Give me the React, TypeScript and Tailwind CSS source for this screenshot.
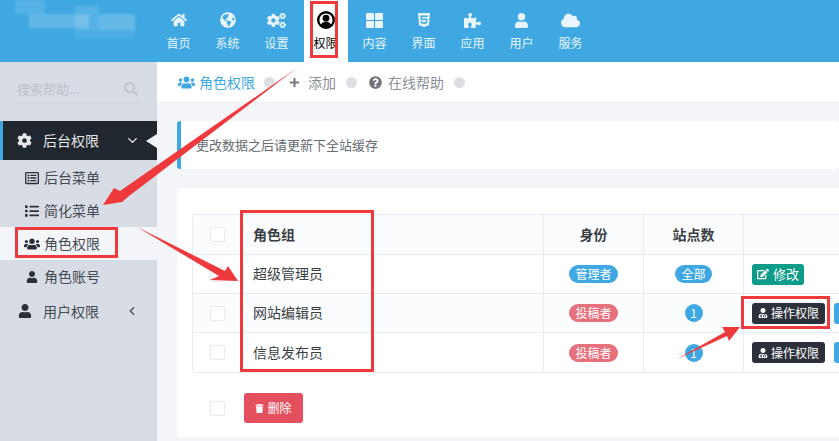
import { FaHome, FaGlobeAmericas, FaCogs, FaThLarge, FaHtml5, FaPuzzlePiece, FaUser, FaCloud, FaUsers, FaPlus, FaQuestionCircle, FaSearch, FaCog, FaRegListAlt, FaList, FaTrash, FaEdit, FaUserMd } from 'react-icons/fa';
import { ChevronDown, ChevronLeft } from 'lucide-react';

function AccountIcon({ size }: { size: number }) {
  return (
    <svg width={size} height={size} viewBox="0 0 18 18">
      <circle cx="9" cy="9" r="7.8" fill="#fff" stroke="#000" strokeWidth="2.4" />
      <circle cx="9" cy="7.2" r="3.4" fill="#000" />
      <path d="M3.6 14.4c1-2.6 3-3.6 5.4-3.6s4.4 1 5.4 3.6c-1.4 1.4-3.3 2.2-5.4 2.2s-4-.8-5.4-2.2z" fill="#000" />
    </svg>
  );
}

const navItems = [
  { label: '首页', icon: FaHome, size: 16 },
  { label: '系统', icon: FaGlobeAmericas, size: 16 },
  { label: '设置', icon: FaCogs, size: 19 },
  { label: '权限', icon: AccountIcon, size: 18, active: true },
  { label: '内容', icon: FaThLarge, size: 17 },
  { label: '界面', icon: FaHtml5, size: 16 },
  { label: '应用', icon: FaPuzzlePiece, size: 17 },
  { label: '用户', icon: FaUser, size: 15 },
  { label: '服务', icon: FaCloud, size: 19 },
];

const subItems = [
  { label: '后台菜单', icon: FaRegListAlt, size: 14 },
  { label: '简化菜单', icon: FaList, size: 14 },
  { label: '角色权限', icon: FaUsers, size: 16, active: true },
  { label: '角色账号', icon: FaUser, size: 12 },
];

const roles = [
  { name: '超级管理员', role: '管理者', admin: true, sites: '全部' },
  { name: '网站编辑员', role: '投稿者', admin: false, sites: '1' },
  { name: '信息发布员', role: '投稿者', admin: false, sites: '1' },
];

function Check() {
  return <span className="block h-[15px] w-[15px] rounded-[2px] border border-[#e8eaee] bg-white" />;
}

function Header() {
  return (
    <header className="flex h-[62px] shrink-0 bg-[#3fa8e2]">
      <div className="w-[154px] shrink-0 pl-[15px]">
        <svg width="140" height="40" viewBox="0 0 140 40">
          <g fill="#ffffff" style={{ filter: 'blur(1px)' }}>
            <rect x="0" y="0" width="30" height="14" opacity="0.12" />
            <rect x="14" y="14" width="60" height="14" opacity="0.18" />
            <rect x="60" y="6" width="24" height="24" opacity="0.12" />
            <rect x="84" y="14" width="36" height="16" opacity="0.2" />
            <rect x="60" y="30" width="60" height="8" opacity="0.08" />
          </g>
        </svg>
      </div>
      {navItems.map((item) => {
        const Icon = item.icon;
        return (
          <div key={item.label} className="flex w-[49px] justify-center">
            <div className={`flex w-[44px] flex-col items-center pt-[11px] ${item.active ? 'bg-white text-black' : 'text-[#e8f5fc]'}`}>
              <span className="flex h-[18px] items-center justify-center">
                <Icon size={item.size} />
              </span>
              <span className="mt-[5px] text-[12px] leading-[18px]">{item.label}</span>
            </div>
          </div>
        );
      })}
    </header>
  );
}

function Sidebar() {
  return (
    <aside className="w-[157px] shrink-0 bg-[#d8dce4] text-[#444a52]">
      <div className="mx-[17px] flex h-[41px] items-center justify-between border-b border-[#cfd3da] pt-[14px] pr-[2px] text-[13px] text-[#bcc1c9]">
        <span>搜索帮助...</span>
        <FaSearch size={14} className="text-[#c3c7ce]" />
      </div>
      <div className="relative mt-[18px] flex h-[39px] items-center border-l-[3px] border-[#3fa8e2] bg-[#21272e] pl-[14px] pr-[17px] text-[14px] text-[#e6e8eb]">
        <FaCog size={15} />
        <span className="ml-[11px] flex-1">后台权限</span>
        <ChevronDown size={15} strokeWidth={2.25} />
        <span className="absolute right-0 top-[13px] h-0 w-0 border-y-[7px] border-r-[11px] border-y-transparent border-r-[#f3f5f9]" />
      </div>
      <div className="mt-[1px] flex flex-col">
        {subItems.map((item) => {
          const Icon = item.icon;
          return (
            <div key={item.label} className={`flex h-[33px] items-center pl-[22px] text-[14px] ${item.active ? 'bg-[#f3f5f9]' : ''}`}>
              <span className="flex w-[22px] justify-center pr-[2px] text-[#2c3138]">
                <Icon size={item.size} />
              </span>
              <span>{item.label}</span>
            </div>
          );
        })}
      </div>
      <div className="flex h-[36px] items-center pl-[18px] pr-[18px] text-[14px]">
        <FaUser size={14} className="text-[#2c3138]" />
        <span className="ml-[11px] flex-1">用户权限</span>
        <ChevronLeft size={14} />
      </div>
    </aside>
  );
}

function Table() {
  return (
    <div className="w-[700px] rounded-[3px] border border-[#e8ebf0] text-[14px] text-[#3a3f45]">
      <div className="flex h-[40px] items-center border-b border-[#e8ebf0] bg-[#fbfcfd] font-bold">
        <div className="flex h-full w-[49px] items-center justify-center pr-[1px]"><Check /></div>
        <div className="flex h-full w-[302px] items-center border-r border-[#e8ebf0] pl-[11px]">角色组</div>
        <div className="flex h-full w-[100px] items-center justify-center border-r border-[#e8ebf0]">身份</div>
        <div className="flex h-full w-[100px] items-center justify-center border-r border-[#e8ebf0]">站点数</div>
      </div>
      {roles.map((row, i) => (
        <div key={row.name} className={`flex h-[39px] items-center ${i < 2 ? 'border-b border-[#e8ebf0]' : ''} ${i === 1 ? 'bg-[#fbfcfd]' : ''}`}>
          <div className="flex h-full w-[49px] items-center justify-center pr-[1px]"><Check /></div>
          <div className="flex h-full w-[302px] items-center border-r border-[#e8ebf0] pb-[1px] pl-[11px]">{row.name}</div>
          <div className="flex h-full w-[100px] items-center justify-center border-r border-[#e8ebf0]">
            <span className={`rounded-full px-[6px] text-[12px] leading-[18px] text-white ${row.admin ? 'bg-[#3fa8e2]' : 'bg-[#e6707c]'}`}>{row.role}</span>
          </div>
          <div className="flex h-full w-[100px] items-center justify-center border-r border-[#e8ebf0]">
            <span className={`flex h-[18px] items-center justify-center rounded-full bg-[#3fa8e2] text-[12px] text-white ${row.admin ? 'px-[6px]' : 'w-[18px]'}`}>{row.sites}</span>
          </div>
          <div className="flex h-full items-center gap-[9px] pl-[8px]">
            {row.admin ? (
              <span className="flex h-[21px] w-[52px] items-center justify-center gap-[4px] rounded-[3px] bg-[#0d9b8a] text-[13px] text-white">
                <FaEdit size={12} />修改
              </span>
            ) : (
              <>
                <span className="flex h-[21px] w-[73px] items-center justify-center gap-[3px] rounded-[3px] bg-[#2b303a] text-[12px] text-white">
                  <FaUserMd size={10} />操作权限
                </span>
                <span className="h-[21px] w-[40px] rounded-[3px] bg-[#3fa8e2]" />
              </>
            )}
          </div>
        </div>
      ))}
    </div>
  );
}

function Main() {
  return (
    <main className="min-w-0 flex-1 overflow-hidden bg-[#f3f5f9]">
      <div className="flex h-[41px] items-center border-b border-[#eceef2] bg-white pl-[21px] text-[14px] text-[#8b8f95]">
        <FaUsers size={17} className="text-[#3fa8e2]" />
        <span className="ml-[4px] text-[#3fa8e2]">角色权限</span>
        <span className="ml-[9px] h-[11px] w-[11px] rounded-full bg-[#dcdee2]" />
        <FaPlus size={11} className="ml-[14px] text-[#777b81]" />
        <span className="ml-[8px]">添加</span>
        <span className="ml-[10px] h-[11px] w-[11px] rounded-full bg-[#dcdee2]" />
        <FaQuestionCircle size={13} className="ml-[12px] text-[#6f7379]" />
        <span className="ml-[6px]">在线帮助</span>
        <span className="ml-[10px] h-[11px] w-[11px] rounded-full bg-[#dcdee2]" />
      </div>
      <div className="ml-[20px] mt-[18px] flex h-[48px] items-center rounded-[3px] border-l-[4px] border-[#3fa8e2] bg-white pl-[15px] text-[13px] text-[#666b72]">
        更改数据之后请更新下全站缓存
      </div>
      <section className="ml-[20px] mt-[19px] h-[249px] bg-white pl-[15px] pt-[26px]">
        <Table />
        <div className="ml-[18px] mt-[20px] flex items-center gap-[19px]">
          <Check />
          <span className="flex h-[30px] w-[59px] items-center justify-center gap-[3px] rounded-[3px] bg-[#e5505e] text-[12px] text-white">
            <FaTrash size={9} />删除
          </span>
        </div>
      </section>
    </main>
  );
}

function Annotations() {
  return (
    <svg className="pointer-events-none absolute left-0 top-0" width="839" height="441" viewBox="0 0 839 441">
      <g fill="none" stroke="#ee3a3c" strokeWidth="3">
        <rect x="311.5" y="2.5" width="25" height="54" />
        <rect x="16.5" y="228.5" width="100" height="28" />
        <rect x="241.5" y="211.5" width="131" height="159" />
        <rect x="742.5" y="297.5" width="86" height="30" />
      </g>
      <g fill="#ee3a3c">
        <polygon points="297,68 129,196 122,202 103,205 114,188 120,191" />
        <polygon points="137,227 225,271 228,266 238,281 210,280 219,276" />
        <polygon points="677,359 725,332 722,327 740,327 729,341 727,336" />
      </g>
    </svg>
  );
}

export default function App() {
  return (
    <div className="relative flex h-[441px] w-[839px] flex-col overflow-hidden font-['Noto_Sans_CJK_SC','Liberation_Sans',sans-serif]">
      <Header />
      <div className="flex min-h-0 flex-1">
        <Sidebar />
        <Main />
      </div>
      <Annotations />
    </div>
  );
}
